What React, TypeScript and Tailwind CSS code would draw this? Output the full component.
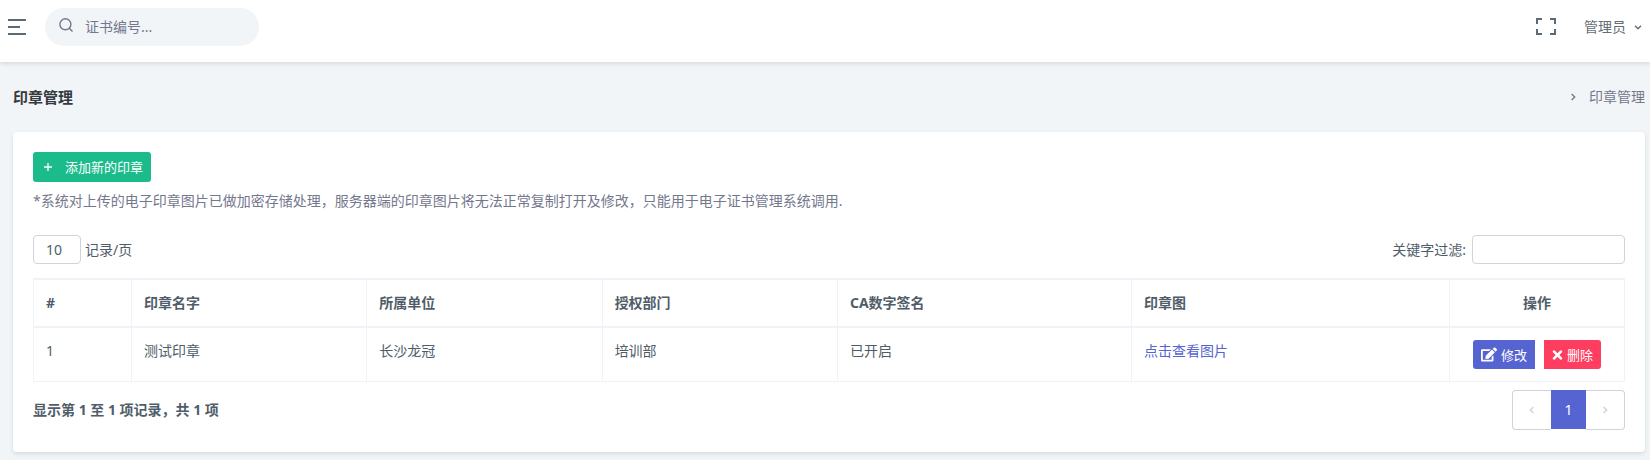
import { FaEdit, FaTimes } from "react-icons/fa";

type Seal = {
  id: number;
  name: string;
  unit: string;
  department: string;
  signature: string;
};

const seals: Seal[] = [
  { id: 1, name: "测试印章", unit: "长沙龙冠", department: "培训部", signature: "已开启" },
];

const headings = ["#", "印章名字", "所属单位", "授权部门", "CA数字签名", "印章图"];

function Chevron({ d, className }: { d: string; className?: string }) {
  return (
    <svg viewBox="0 0 8 8" className={className} fill="none" stroke="currentColor" strokeWidth="1.4" aria-hidden="true">
      <path d={d} />
    </svg>
  );
}

const LEFT = "M5.3 1 2.3 4l3 3";
const RIGHT = "M2.7 1l3 3-3 3";
const DOWN = "M1 2.7l3 3 3-3";

function TopBar() {
  return (
    <header className="flex h-[62px] items-start justify-between bg-white pt-2 pr-2 pl-2 shadow-[0_2px_4px_rgba(15,34,58,0.12)]">
      <div className="flex h-[38px] items-center gap-[19px]">
        <button type="button" aria-label="菜单" className="text-[#5b6b73]">
          <svg viewBox="0 0 18 16" className="block h-4 w-[18px]" fill="currentColor">
            <path d="M0 0h18v2H0zM0 7h12v2H0zM0 14h18v2H0z" />
          </svg>
        </button>
        <label className="flex h-[38px] w-[214px] items-center gap-3 rounded-full bg-[#f1f5f7] pr-4 pl-[14px] text-[#74788d]">
          <svg viewBox="0 0 14 14" className="-mt-1 h-[14px] w-[14px] shrink-0" fill="none" stroke="currentColor" strokeWidth="1.4" aria-hidden="true">
            <circle cx="6.4" cy="6.3" r="5.5" />
            <path d="M10.3 10.2l3.2 3.2" />
          </svg>
          <input
            type="text"
            aria-label="证书编号"
            placeholder="证书编号..."
            className="w-full min-w-0 bg-transparent outline-none placeholder:text-[#74788d]"
          />
        </label>
      </div>
      <div className="flex h-[38px] items-center gap-7 text-[#636e75]">
        <button type="button" aria-label="全屏" className="text-[#5b6b73]">
          <svg viewBox="0 0 20 18" className="block h-[18px] w-5" fill="none" stroke="currentColor" strokeWidth="2">
            <path d="M1 6V1h5M14 1h5v5M19 11v5h-5M6 16H1v-5" />
          </svg>
        </button>
        <button type="button" className="flex items-center gap-2">
          管理员
          <Chevron d={DOWN} className="h-2 w-2" />
        </button>
      </div>
    </header>
  );
}

function Pager() {
  return (
    <nav aria-label="分页" className="flex h-10 text-[#ced4da]">
      <button type="button" disabled aria-label="上一页" className="flex w-[39px] items-center justify-center rounded-l border border-r-0 border-[#ced4da]">
        <Chevron d={LEFT} className="h-2 w-2" />
      </button>
      <button type="button" aria-current="page" className="h-[39px] w-[35px] bg-[#5664d2] text-white">
        1
      </button>
      <button type="button" disabled aria-label="下一页" className="flex w-[39px] items-center justify-center rounded-r border border-l-0 border-[#ced4da]">
        <Chevron d={RIGHT} className="h-2 w-2" />
      </button>
    </nav>
  );
}

function SealTable() {
  return (
    <table className="w-full table-fixed border-collapse border border-t-2 border-[#eff2f7] text-left">
      <colgroup>
        <col className="w-[98px]" />
        <col className="w-[14.8%]" />
        <col className="w-[14.8%]" />
        <col className="w-[14.8%]" />
        <col className="w-[18.5%]" />
        <col className="w-[20%]" />
        <col className="w-[11%]" />
      </colgroup>
      <thead>
        <tr>
          {headings.map((heading) => (
            <th key={heading} scope="col" className="border border-y-2 border-[#eff2f7] p-3 font-bold">
              {heading}
            </th>
          ))}
          <th scope="col" className="border border-y-2 border-[#eff2f7] p-3 text-center font-bold">
            操作
          </th>
        </tr>
      </thead>
      <tbody>
        {seals.map((seal) => (
          <tr key={seal.id} className="align-top">
            <td className="border border-[#eff2f7] p-3">{seal.id}</td>
            <td className="border border-[#eff2f7] p-3">{seal.name}</td>
            <td className="border border-[#eff2f7] p-3">{seal.unit}</td>
            <td className="border border-[#eff2f7] p-3">{seal.department}</td>
            <td className="border border-[#eff2f7] p-3">{seal.signature}</td>
            <td className="border border-[#eff2f7] p-3">
              <a href="#seal" className="text-[#5664d2]">点击查看图片</a>
            </td>
            <td className="border border-[#eff2f7] px-2 py-3">
              <div className="flex justify-center gap-[9px] text-[13px] leading-5 text-white">
                <button type="button" className="flex h-[29px] items-center gap-1 rounded-l-[3px] bg-[#5664d2] px-2">
                  <FaEdit className="h-[15px] w-[16px]" />
                  修改
                </button>
                <button type="button" className="flex h-[29px] items-center gap-1 rounded-r-[3px] bg-[#ff3d60] px-2">
                  <FaTimes className="h-[14px] w-[11px]" />
                  删除
                </button>
              </div>
            </td>
          </tr>
        ))}
      </tbody>
    </table>
  );
}

export default function App() {
  return (
    <div className="min-h-screen bg-[#f1f5f7] font-['Noto_Sans','Noto_Sans_CJK_SC',sans-serif] text-[14px] leading-[22px] text-[#505d69]">
      <TopBar />
      <main className="pt-6 pr-[5px] pb-2 pl-[13px]">
        <div className="flex items-center justify-between">
          <h1 className="text-[15px] leading-5 font-bold text-[#343a40]">印章管理</h1>
          <div className="flex items-center gap-3 text-[#74788d]">
            <Chevron d={RIGHT} className="h-2 w-2" />
            <span>印章管理</span>
          </div>
        </div>
        <section className="mt-6 rounded bg-white px-5 pt-5 pb-[22px] shadow-[0_2px_4px_rgba(15,34,58,0.12)]">
          <button type="button" className="flex h-[30px] items-center gap-[13px] rounded-[3px] bg-[#1cbb8c] pr-2 pl-[11px] text-[13px] leading-5 text-white">
            <svg viewBox="0 0 8 8" className="h-2 w-2" fill="none" stroke="currentColor" strokeWidth="1.3" aria-hidden="true">
              <path d="M4 0v8M0 4h8" />
            </svg>
            添加新的印章
          </button>
          <p className="mt-2 text-[#74788d]">
            *系统对上传的电子印章图片已做加密存储处理，服务器端的印章图片将无法正常复制打开及修改，只能用于电子证书管理系统调用.
          </p>
          <div className="mt-[23px] mb-[14px] flex items-center justify-between">
            <label className="flex items-center gap-1">
              <select defaultValue="10" className="h-[29px] w-12 appearance-none rounded border border-[#ced4da] bg-white pl-3 text-[#505d69]">
                <option>10</option>
                <option>25</option>
                <option>50</option>
              </select>
              记录/页
            </label>
            <label className="flex items-center gap-[6px]">
              关键字过滤:
              <input type="search" className="h-[29px] w-[153px] rounded border border-[#ced4da] px-2" />
            </label>
          </div>
          <SealTable />
          <div className="mt-2 flex items-center justify-between">
            <p className="font-bold">显示第 1 至 1 项记录，共 1 项</p>
            <Pager />
          </div>
        </section>
      </main>
    </div>
  );
}
